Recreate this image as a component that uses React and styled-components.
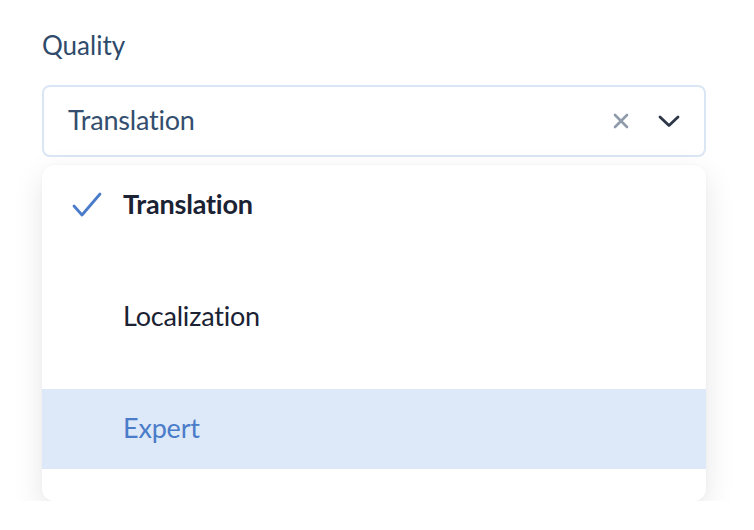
import React from 'react'
import styled, { createGlobalStyle } from 'styled-components'

const GlobalStyle = createGlobalStyle`
  body {
    margin: 0;
    background: #ffffff;
    font-family: Lato, "Open Sans", sans-serif;
  }
`

const options = [
  { label: 'Translation', selected: true },
  { label: 'Localization' },
  { label: 'Expert', active: true },
]

const App = () => {
  return (
    <Page>
      <GlobalStyle />
      <Label>Quality</Label>
      <SelectBox>
        <Value>Translation</Value>
        <Indicators>
          <IconButton>
            <svg width="16" height="16" viewBox="0 0 16 16" fill="none">
              <path d="M2 2 L14 14 M14 2 L2 14" stroke="#8f9bab" strokeWidth="2.6" strokeLinecap="round" />
            </svg>
          </IconButton>
          <IconButton>
            <svg width="22" height="14" viewBox="0 0 22 14" fill="none">
              <path d="M2 3 L11 11.5 L20 3" stroke="#2d3748" strokeWidth="2.8" strokeLinecap="round" strokeLinejoin="round" />
            </svg>
          </IconButton>
        </Indicators>
      </SelectBox>
      <Menu>
        {options.map((o) => (
          <Option key={o.label} selected={o.selected} active={o.active}>
            <Check>
              {o.selected && (
                <svg width="30" height="26" viewBox="0 0 30 26" fill="none">
                  <path d="M2 14 L10 23 L28 2" stroke="#4a7cc9" strokeWidth="2.8" strokeLinecap="round" strokeLinejoin="round" />
                </svg>
              )}
            </Check>
            <OptionText>{o.label}</OptionText>
          </Option>
        ))}
      </Menu>
    </Page>
  )
}

export default App

const Page = styled.div`
  padding: 28px 48px 0 42px;
  display: flex;
  flex-direction: column;
`

const Label = styled.div`
  font-size: 26px;
  color: #2f4a6a;
  line-height: 34px;
  margin-bottom: 23px;
`

const SelectBox = styled.div`
  height: 72px;
  box-sizing: border-box;
  border: 2px solid #dbe6f4;
  border-radius: 8px;
  display: flex;
  align-items: center;
  padding: 0 24px 0 24px;
`

const Value = styled.div`
  flex: 1;
  font-size: 27px;
  letter-spacing: -0.2px;
  color: #334e6e;
  padding-bottom: 3px;
`

const Indicators = styled.div`
  display: flex;
  align-items: center;
  gap: 26px;
`

const IconButton = styled.div`
  display: flex;
  align-items: center;
  justify-content: center;
  width: 22px;
`

const Menu = styled.div`
  margin-top: 8px;
  background: #ffffff;
  border-radius: 12px;
  box-shadow: 0 10px 30px rgba(0, 0, 0, 0.1), 0 0 3px rgba(0, 0, 0, 0.04);
  display: flex;
  flex-direction: column;
  gap: 32px;
  padding: 0 0 32px;
  overflow: hidden;
`

const Option = styled.div`
  height: 80px;
  display: flex;
  align-items: center;
  padding-left: 30px;
  background: ${(p) => (p.active ? '#dde8f9' : 'transparent')};
  color: ${(p) => (p.active ? '#4a7cc9' : '#1a2233')};
  font-weight: ${(p) => (p.selected ? 700 : 400)};
`

const Check = styled.div`
  width: 51px;
  display: flex;
  align-items: center;
`

const OptionText = styled.span`
  font-size: 27px;
  letter-spacing: -0.2px;
  padding-bottom: 3px;
`
